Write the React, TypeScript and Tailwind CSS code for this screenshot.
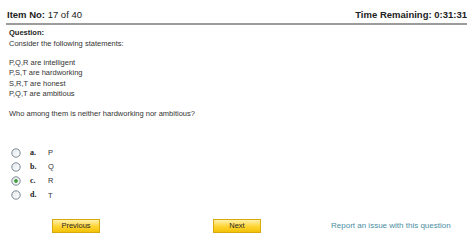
import React from "react";

const options = [
  { key: "a.", value: "P", checked: false },
  { key: "b.", value: "Q", checked: false },
  { key: "c.", value: "R", checked: true },
  { key: "d.", value: "T", checked: false },
];

function Radio({ checked }: { checked: boolean }) {
  return (
    <svg width="10" height="10" viewBox="0 0 10 10" className="block">
      <defs>
        <linearGradient id="rg" x1="0" y1="0" x2="1" y2="1">
          <stop offset="0" stopColor="#e4e8ec" />
          <stop offset="1" stopColor="#ffffff" />
        </linearGradient>
      </defs>
      <circle cx="5" cy="5" r="4.2" fill="url(#rg)" stroke="#7b8894" strokeWidth="1" />
      {checked && <circle cx="5" cy="5" r="1.9" fill="#3f9a3f" />}
    </svg>
  );
}

function YellowButton({ label, className = "" }: { label: string; className?: string }) {
  return (
    <button
      className={`block w-[48px] h-[14px] border border-[#d8a90c] bg-gradient-to-b from-[#fff1a6] via-[#ffd633] to-[#f2c200] text-[7.5px] leading-[12px] text-[#2a2a2a] font-['Liberation_Sans',Arial,sans-serif] ${className}`}
    >
      {label}
    </button>
  );
}

export default function App() {
  return (
    <div className="w-[474px] h-[251px] bg-white font-['Liberation_Sans',Arial,sans-serif] text-[#333]">
      {/* header */}
      <div className="ml-[6px] w-[461px] flex justify-between items-end pt-[9px] pb-[2px] pl-[1px] border-b-2 border-[#9c9c9c] text-[9.5px] leading-[12px] text-[#222]">
        <div>
          <span className="font-bold">Item No:</span> 17 of 40
        </div>
        <div className="font-bold">Time Remaining: 0:31:31</div>
      </div>

      {/* question */}
      <div className="pl-[9px] mt-[3px] text-[7.5px] leading-[10.5px]">
        <div className="font-bold text-[#222]">Question:</div>
        <div>Consider the following statements:</div>
        <div className="mt-[9px] leading-[10.3px]">
          <div>P,Q,R are intelligent</div>
          <div>P,S,T are hardworking</div>
          <div>S,R,T are honest</div>
          <div>P,Q,T are ambitious</div>
        </div>
        <div className="mt-[10px]">Who among them is neither hardworking nor ambitious?</div>
      </div>

      {/* options */}
      <div className="mt-[28px] pl-[11px] flex flex-col gap-[4.2px]">
        {options.map((o) => (
          <div key={o.key} className="flex items-center h-[10px] text-[7.5px]">
            <Radio checked={o.checked} />
            <span className="ml-[9px] w-[18px] font-bold font-['Liberation_Serif','Times_New_Roman',serif] text-[8px] text-[#222]">
              {o.key}
            </span>
            <span>{o.value}</span>
          </div>
        ))}
      </div>

      {/* footer */}
      <div className="mt-[19px] pl-[52px] flex items-center">
        <YellowButton label="Previous" />
        <YellowButton label="Next" className="ml-[113px]" />
        <a className="ml-[70px] text-[8px] leading-[12px] text-[#4a8ea3]">Report an issue with this question</a>
      </div>
    </div>
  );
}
